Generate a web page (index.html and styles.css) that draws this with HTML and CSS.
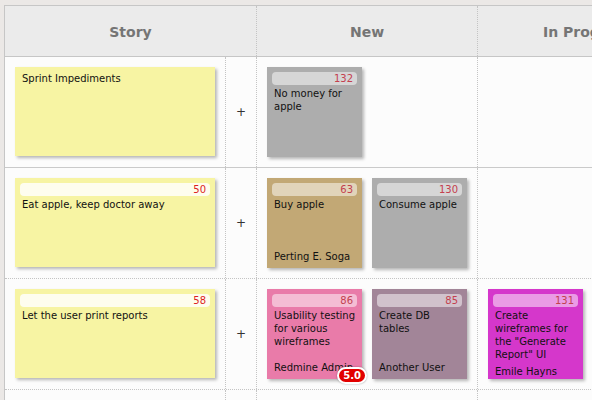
FILE: index.html
```html
<!DOCTYPE html>
<html>
<head>
<meta charset="utf-8">
<link rel="stylesheet" href="styles.css">
</head>
<body>
<div class="board">
  <div class="row head">
    <div class="hcell story-h">Story</div>
    <div class="hcell">New</div>
    <div class="hcell">In Progress</div>
    <div class="hcell">Resolved</div>
  </div>

  <div class="row solid">
    <div class="cell story"><div class="card story-card"><div class="title">Sprint Impediments</div></div></div>
    <div class="cell plus">+</div>
    <div class="cell tasks">
      <div class="card grey"><div class="bar">132</div><div class="title">No money for apple</div></div>
    </div>
    <div class="cell tasks"></div>
    <div class="cell tasks"></div>
  </div>

  <div class="row">
    <div class="cell story"><div class="card story-card"><div class="bar sbar">50</div><div class="title">Eat apple, keep doctor away</div></div></div>
    <div class="cell plus">+</div>
    <div class="cell tasks">
      <div class="card tan"><div class="bar">63</div><div class="title">Buy apple</div><div class="assignee">Perting E. Soga</div></div>
      <div class="card grey"><div class="bar">130</div><div class="title">Consume apple</div></div>
    </div>
    <div class="cell tasks"></div>
    <div class="cell tasks"></div>
  </div>

  <div class="row">
    <div class="cell story"><div class="card story-card"><div class="bar sbar">58</div><div class="title">Let the user print reports</div></div></div>
    <div class="cell plus">+</div>
    <div class="cell tasks">
      <div class="card pink"><div class="bar">86</div><div class="title">Usability testing for various wireframes</div><div class="assignee">Redmine Admin</div><span class="badge">5.0</span></div>
      <div class="card mauve"><div class="bar">85</div><div class="title">Create DB tables</div><div class="assignee">Another User</div></div>
    </div>
    <div class="cell tasks">
      <div class="card magenta"><div class="bar">131</div><div class="title">Create wireframes for the "Generate Report" UI</div><div class="assignee">Emile Hayns</div></div>
    </div>
    <div class="cell tasks"></div>
  </div>

  <div class="row">
    <div class="cell story"></div>
    <div class="cell plus"></div>
    <div class="cell tasks"></div>
    <div class="cell tasks"></div>
    <div class="cell tasks"></div>
  </div>
</div>
</body>
</html>
```

FILE: styles.css
```css
html, body {
  margin: 0;
  padding: 0;
  overflow: hidden;
  background: #ebe8e6;
}
body {
  padding: 5px 0 0 4px;
  font-family: "DejaVu Sans", Verdana, sans-serif;
}
.board {
  width: 1200px;
  border-top: 1px solid #c6c6c6;
  border-left: 1px solid #c6c6c6;
  background: #fcfcfc;
}
.row {
  display: grid;
  grid-template-columns: 221px 31px 221px 221px 221px;
  height: 111px;
  box-sizing: border-box;
  border-bottom: 1px dotted #c4c4c4;
}
.row.solid {
  border-bottom: 1px solid #cacaca;
}
.row.head {
  grid-template-columns: 252px 221px 221px 221px;
  height: 51px;
  background: #ebebeb;
  border-bottom: 1px solid #c6c6c6;
}
.hcell {
  display: flex;
  align-items: center;
  justify-content: center;
  font-weight: bold;
  font-size: 14px;
  color: #757575;
  border-right: 1px dotted #c4c4c4;
  padding-top: 1px;
}
.cell {
  box-sizing: border-box;
  border-right: 1px dotted #c4c4c4;
}
.story, .tasks {
  padding: 10px;
  display: flex;
  gap: 10px;
  align-items: flex-start;
}
.plus {
  display: flex;
  align-items: center;
  justify-content: center;
  font-size: 12px;
  color: #333;
}
.card {
  position: relative;
  width: 95px;
  height: 90px;
  box-sizing: border-box;
  padding: 5px;
  display: flex;
  flex-direction: column;
  font-size: 10px;
  line-height: 13px;
  color: #111;
  box-shadow: 2px 2px 3px rgba(0, 0, 0, 0.28);
}
.story-card {
  width: 200px;
  height: 89px;
  background: #f7f4a3;
}
.bar {
  flex: none;
  height: 13px;
  border-radius: 4px;
  background: rgba(255, 255, 255, 0.5);
  text-align: right;
  padding-right: 4px;
  font-size: 10px;
  line-height: 13px;
  color: #c4404e;
  margin-bottom: 2px;
}
.bar.sbar {
  background: rgba(255, 255, 255, 0.82);
  color: #dd1f1f;
}
.title {
  padding: 0 0 0 2px;
  margin-right: -1px;
}
.assignee {
  flex: none;
  margin-top: auto;
  padding: 4px 2px 0;
  white-space: nowrap;
}
.grey { background: #adadad; }
.tan { background: #c2a875; }
.pink { background: #e97ba9; }
.mauve { background: #a28598; }
.magenta { background: #d537cb; }
.badge {
  position: absolute;
  right: -5px;
  bottom: -5px;
  background: #e20000;
  color: #fff;
  font-weight: bold;
  font-size: 10px;
  line-height: 13px;
  padding: 0 4px;
  border: 2px solid #fff;
  border-radius: 9px;
  box-shadow: 0 0 2px rgba(0, 0, 0, 0.35);
}
```
